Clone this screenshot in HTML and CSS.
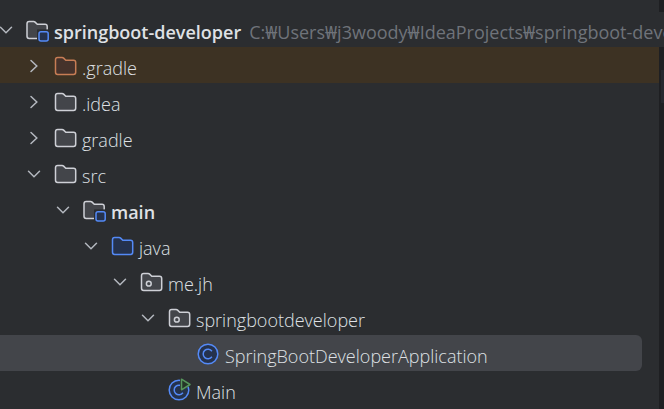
FILE: index.html
```html
<!DOCTYPE html>
<html lang="en">
<head>
<meta charset="UTF-8">
<meta name="viewport" content="width=device-width, initial-scale=1.0">
<title>springboot-developer</title>
<link rel="stylesheet" href="styles.css">
</head>
<body>

<!-- shared icons -->
<svg class="defs" width="0" height="0">
    <symbol id="down" viewBox="0 0 16 16">
        <path d="M2.5 5.2 8 10.7 13.5 5.2" fill="none" stroke="#b4b8bf" stroke-width="1.5" stroke-linecap="round"/>
    </symbol>
    <symbol id="right" viewBox="0 0 16 16">
        <path d="M5 2.5 10.8 8 5 13.5" fill="none" stroke="#b4b8bf" stroke-width="1.5" stroke-linecap="round"/>
    </symbol>
    <symbol id="folder" viewBox="0 0 24 24">
        <path d="M2.5 5.7Q2.5 3.5 4.7 3.5H9.1Q10 3.5 10.6 4.1L12.8 6.3H20.5Q22.7 6.3 22.7 8.5V18.3Q22.7 20.5 20.5 20.5H4.7Q2.5 20.5 2.5 18.3Z" stroke-width="1.5"/>
    </symbol>
    <symbol id="module" viewBox="0 0 24 24">
        <path d="M12.2 20.5H4.2Q2 20.5 2 18.3V5.7Q2 3.5 4.2 3.5H8.6Q9.5 3.5 10.1 4.1L12.3 6.3H20Q22.2 6.3 22.2 8.5V11.5H12.2Z" fill="#43454a"/>
        <path d="M12.2 20.5H4.2Q2 20.5 2 18.3V5.7Q2 3.5 4.2 3.5H8.6Q9.5 3.5 10.1 4.1L12.3 6.3H20Q22.2 6.3 22.2 8.5V11.5" fill="none" stroke="#ced0d6" stroke-width="1.5"/>
        <rect x="12" y="11.8" width="12" height="12" fill="#2b2d30"/>
        <rect x="14" y="13.8" width="9.2" height="9.2" rx="2" fill="#25324d" stroke="#548af7" stroke-width="1.5"/>
    </symbol>
    <symbol id="class" viewBox="0 0 24 24">
        <circle cx="12" cy="12" r="9.8" fill="#25324d" stroke="#548af7" stroke-width="1.5"/>
        <path d="M15.9 9.2A4.8 4.8 0 1 0 15.9 14.8" fill="none" stroke="#548af7" stroke-width="1.5"/>
    </symbol>
</svg>

<div class="window">
    <ul class="tree">
        <li class="row level-0">
            <svg class="arrow"><use href="#down"/></svg>
            <svg class="icon"><use href="#module"/></svg>
            <span class="name bold">springboot-developer</span>
            <span class="path">C:₩Users₩j3woody₩IdeaProjects₩springboot-developer</span>
        </li>
        <li class="row level-1 excluded">
            <svg class="arrow"><use href="#right"/></svg>
            <svg class="icon folder-orange"><use href="#folder"/></svg>
            <span class="name">.gradle</span>
        </li>
        <li class="row level-1">
            <svg class="arrow"><use href="#right"/></svg>
            <svg class="icon folder"><use href="#folder"/></svg>
            <span class="name">.idea</span>
        </li>
        <li class="row level-1">
            <svg class="arrow"><use href="#right"/></svg>
            <svg class="icon folder"><use href="#folder"/></svg>
            <span class="name">gradle</span>
        </li>
        <li class="row level-1">
            <svg class="arrow"><use href="#down"/></svg>
            <svg class="icon folder"><use href="#folder"/></svg>
            <span class="name">src</span>
        </li>
        <li class="row level-2">
            <svg class="arrow"><use href="#down"/></svg>
            <svg class="icon"><use href="#module"/></svg>
            <span class="name bold">main</span>
        </li>
        <li class="row level-3">
            <svg class="arrow"><use href="#down"/></svg>
            <svg class="icon folder-blue"><use href="#folder"/></svg>
            <span class="name">java</span>
        </li>
        <li class="row level-4">
            <svg class="arrow"><use href="#down"/></svg>
            <svg class="icon folder" viewBox="0 0 24 24">
                <use href="#folder"/>
                <circle cx="9.8" cy="13.7" r="2.4" stroke-width="1.5"/>
            </svg>
            <span class="name">me.jh</span>
        </li>
        <li class="row level-5">
            <svg class="arrow"><use href="#down"/></svg>
            <svg class="icon folder" viewBox="0 0 24 24">
                <use href="#folder"/>
                <circle cx="9.8" cy="13.7" r="2.4" stroke-width="1.5"/>
            </svg>
            <span class="name">springbootdeveloper</span>
        </li>
        <li class="row level-6 selected">
            <span class="arrow"></span>
            <svg class="icon"><use href="#class"/></svg>
            <span class="name">SpringBootDeveloperApplication</span>
        </li>
        <li class="row level-5">
            <span class="arrow"></span>
            <svg class="icon" viewBox="0 0 24 24">
                <use href="#class"/>
                <path d="M13 0V13.5L24 7V0Z" fill="#2b2d30"/>
                <path d="M14.5 1.2V11.8L23 6.5Z" fill="#253627" stroke="#57965c" stroke-width="1.5" stroke-linejoin="round"/>
            </svg>
            <span class="name">Main</span>
        </li>
    </ul>
    <div class="editor">
        <div class="tab"></div>
        <div class="gutter"></div>
    </div>
</div>

</body>
</html>
```
FILE: styles.css
```css
body {
    background-color: #2b2d30;
    color: #dfe1e5;
    font-family: "Open Sans", "Noto Sans", "Noto Sans CJK KR", sans-serif;
    font-size: 18px;
    margin: 0;
}
.defs {
    position: absolute;
}
.window {
    display: flex;
    min-height: 100vh;
    overflow: hidden;
}
.tree {
    flex: 1;
    min-width: 0;
    list-style: none;
    margin: 0;
    padding: 11px 0 0;
    z-index: 1;
}
.editor {
    width: 5px;
    padding-top: 12px;
    box-sizing: border-box;
    background-color: #1e1f22;
}
.tab {
    height: 35px;
    background-color: #2b2d30;
}
.gutter {
    height: 33px;
    margin-top: 23px;
    margin-left: 2px;
    background-color: #26282e;
}
.row {
    display: flex;
    align-items: center;
    height: 36px;
    white-space: nowrap;
}
.arrow {
    width: 16px;
    height: 16px;
    flex: none;
    margin-right: 11px;
    margin-top: 2px;
}
.icon {
    width: 24px;
    height: 24px;
    flex: none;
    margin-right: 5px;
    margin-top: 2px;
}
.name {
    font-weight: 300;
    line-height: 24px;
    padding-top: 5px;
}
.bold {
    font-weight: 600;
}
.path {
    color: #6f737a;
    line-height: 24px;
    padding-top: 5px;
    margin-left: 8px;
}
.level-0 {
    margin-left: -2px;
}
.level-1 {
    padding-left: 26px;
}
.level-2 {
    padding-left: 55px;
}
.level-3 {
    padding-left: 83px;
}
.level-4 {
    padding-left: 112px;
}
.level-5 {
    padding-left: 140px;
}
.level-6 {
    padding-left: 169px;
}
.excluded {
    background-color: #3d3223;
}
.selected {
    background-color: #43454a;
    border-radius: 0 6px 6px 0;
    margin-right: 17px;
}
.folder {
    fill: #43454a;
    stroke: #ced0d6;
}
.folder-orange {
    fill: #45322b;
    stroke: #c77d55;
}
.folder-blue {
    fill: #25324d;
    stroke: #548af7;
}
```
